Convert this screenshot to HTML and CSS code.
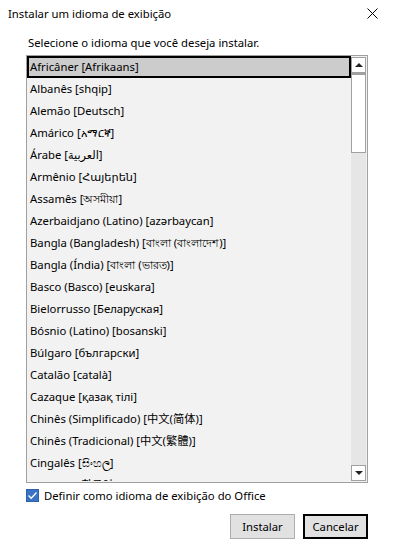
FILE: index.html
```html
<html>
<head>
	<title>Instalar um idioma de exibição</title>
	<meta charset="UTF-8">
	<meta name="viewport" content="width=device-width, initial-scale=1.0"/>
	<link rel="stylesheet" href="styles.css">
</head>
<body>
	<div class="titlebar">
		<span class="title">Instalar um idioma de exibição</span>
		<svg class="close" width="11" height="11" viewBox="0 0 11 11">
			<path d="M0.5 0.5 L10.5 10.5 M10.5 0.5 L0.5 10.5" stroke="#000" stroke-width="1" fill="none"/>
		</svg>
	</div>

	<div class="content">
		<p class="prompt">Selecione o idioma que você deseja instalar.</p>

		<div class="listbox">
			<ul class="items">
				<li class="selected">Africâner [Afrikaans]</li>
				<li>Albanês [shqip]</li>
				<li>Alemão [Deutsch]</li>
				<li>Amárico [አማርኛ]</li>
				<li>Árabe [العربية]</li>
				<li>Armênio [Հայերեն]</li>
				<li>Assamês [অসমীয়া]</li>
				<li>Azerbaidjano (Latino) [azərbaycan]</li>
				<li>Bangla (Bangladesh) [বাংলা (বাংলাদেশ)]</li>
				<li>Bangla (Índia) [বাংলা (ভারত)]</li>
				<li>Basco (Basco) [euskara]</li>
				<li>Bielorrusso [Беларуская]</li>
				<li>Bósnio (Latino) [bosanski]</li>
				<li>Búlgaro [български]</li>
				<li>Catalão [català]</li>
				<li>Cazaque [қазақ тілі]</li>
				<li>Chinês (Simplificado) [中文(简体)]</li>
				<li>Chinês (Tradicional) [中文(繁體)]</li>
				<li>Cingalês [සිංහල]</li>
				<li class="cut">Coreano [한국어]</li>
			</ul>
			<div class="scrollbar">
				<div class="sb-btn"><span class="arrow-up"></span></div>
				<div class="thumb"></div>
				<div class="track"></div>
				<div class="sb-btn sb-down"><span class="arrow-down"></span></div>
			</div>
		</div>

		<label class="check-row">
			<span class="checkbox">
				<svg width="11" height="11" viewBox="0 0 11 11">
					<path d="M1.5 5.5 L4.2 8.2 L9.5 2.5" stroke="#fff" stroke-width="1.3" fill="none"/>
				</svg>
			</span>
			<span>Definir como idioma de exibição do Office</span>
		</label>

		<div class="buttons">
			<button class="btn">Instalar</button>
			<button class="btn default">Cancelar</button>
		</div>
	</div>
</body>
</html>
```

FILE: styles.css
```css
*{
	margin: 0;
	padding: 0;
	box-sizing: border-box;
}
body{
	background: #fff;
	color: #000;
	font-family: "Noto Sans", "Noto Sans CJK SC", "DejaVu Sans", sans-serif;
	font-size: 11.3px;
}
.titlebar{
	height: 28px;
	display: flex;
	align-items: center;
	justify-content: space-between;
	padding: 0 18px 2px 8px;
}
.content{
	padding: 0 28px 0 26px;
}
.prompt{
	padding-top: 7px;
	padding-left: 2px;
	line-height: 16px;
	margin-bottom: 4px;
}
.listbox{
	display: flex;
	height: 428px;
	border: 1px solid #a0a0a0;
	background: #f2f2f2;
}
.items{
	flex: 1;
	list-style: none;
	overflow: hidden;
}
.items li{
	height: 22px;
	line-height: 22px;
	padding-left: 3px;
	white-space: nowrap;
	overflow: hidden;
}
.items li.selected{
	background: #cccccc;
	border: 2px solid #000;
	line-height: 18px;
	padding-left: 1px;
}
.items li.cut{
	height: 7px;
	line-height: 22px;
}
.scrollbar{
	width: 16px;
	display: flex;
	flex-direction: column;
	padding: 1px 1px 1px 0;
}
.sb-btn{
	height: 16px;
	border: 1px solid #a0a0a0;
	background: #fff;
	display: flex;
	align-items: center;
	justify-content: center;
}
.arrow-up,.arrow-down{
	width: 0;
	height: 0;
	border-left: 4px solid transparent;
	border-right: 4px solid transparent;
}
.arrow-up{
	border-bottom: 4px solid #222;
}
.arrow-down{
	border-top: 4px solid #222;
}
.thumb{
	height: 80px;
	border: 1px solid #a0a0a0;
	border-top-width: 2px;
	background: #fff;
}
.track{
	flex: 1;
	background: #e6e6e6;
}
.check-row{
	display: flex;
	align-items: center;
	gap: 5px;
	margin-top: 5px;
	height: 16px;
	line-height: 16px;
}
.checkbox{
	width: 13px;
	height: 13px;
	background: #3b72c4;
	border: 1px solid #2e61ad;
	display: flex;
	align-items: center;
	justify-content: center;
	margin-bottom: 2px;
}
.buttons{
	display: flex;
	justify-content: flex-end;
	gap: 8px;
	margin-top: 10px;
}
.btn{
	width: 65px;
	height: 25px;
	background: #e1e1e1;
	border: 1px solid #adadad;
	font-family: "Noto Sans", sans-serif;
	font-size: 11.3px;
	color: #000;
}
.btn.default{
	border: 2px solid #000;
}
.btn:focus{
	outline: 0;
}
```
